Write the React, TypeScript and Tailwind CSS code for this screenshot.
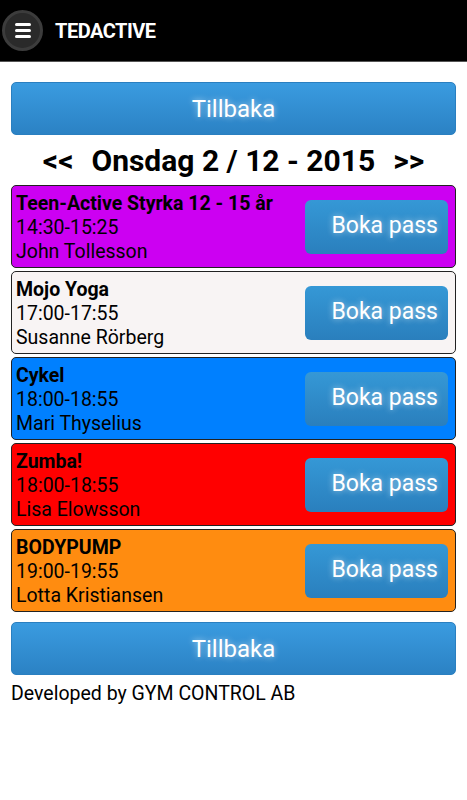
import React from 'react'

const classes = [
  { name: 'Teen-Active Styrka 12 - 15 år', time: '14:30-15:25', leader: 'John Tollesson', bg: 'bg-[#cc00f2]' },
  { name: 'Mojo Yoga', time: '17:00-17:55', leader: 'Susanne Rörberg', bg: 'bg-[#f8f4f4]' },
  { name: 'Cykel', time: '18:00-18:55', leader: 'Mari Thyselius', bg: 'bg-[#0080ff]' },
  { name: 'Zumba!', time: '18:00-18:55', leader: 'Lisa Elowsson', bg: 'bg-[#ff0000]' },
  { name: 'BODYPUMP', time: '19:00-19:55', leader: 'Lotta Kristiansen', bg: 'bg-[#ff8c10]' },
]

const glow = '[text-shadow:0_0_6px_rgba(255,255,255,0.6)]'

function BackButton() {
  return (
    <button className={`w-full h-[53px] rounded-[5px] bg-gradient-to-b from-[#3a9be0] to-[#2b82c4] border border-[#2a7fc0] text-white text-[24px] ${glow}`}>
      Tillbaka
    </button>
  )
}

export default function App() {
  return (
    <div className="w-[467px] min-h-[800px] bg-white font-['Roboto',sans-serif]">
      {/* Header */}
      <div className="h-[62px] bg-black flex items-center border-b border-[#555]">
        <div className="ml-[2px] w-[41px] h-[41px] rounded-full bg-[#2a2a2a] border-[3px] border-[#3c3c3c] flex items-center justify-center">
          <div className="flex flex-col gap-[3px]">
            <span className="block w-[16px] h-[3px] bg-white rounded-sm" />
            <span className="block w-[16px] h-[3px] bg-white rounded-sm" />
            <span className="block w-[16px] h-[3px] bg-white rounded-sm" />
          </div>
        </div>
        <span className="ml-[12px] text-white font-bold text-[20px] tracking-tight">TEDACTIVE</span>
      </div>

      <div className="px-[11px] pt-[20px]">
        <BackButton />

        <div className="flex items-center justify-center gap-[18px] h-[50px] font-bold text-[30px] text-black">
          <span>&lt;&lt;</span>
          <span>Onsdag 2 / 12 - 2015</span>
          <span>&gt;&gt;</span>
        </div>

        <div className="flex flex-col gap-[3px]">
          {classes.map((c) => (
            <div key={c.name} className={`${c.bg} h-[83px] rounded-[5px] border border-[#222] flex items-center justify-between pl-[4px] pr-[7px]`}>
              <div className="mt-[3px] text-[19.5px] leading-[24px] text-black">
                <div className="font-bold">{c.name}</div>
                <div>{c.time}</div>
                <div>{c.leader}</div>
              </div>
              <button className={`w-[143px] h-[54px] rounded-[6px] bg-gradient-to-b from-[#3598d6] to-[#2a7fbd] text-white text-[23px] flex items-center justify-end pr-[10px] ${glow}`}>
                Boka pass
              </button>
            </div>
          ))}
        </div>

        <div className="mt-[10px]">
          <BackButton />
        </div>

        <div className="mt-[4px] text-[19.5px] text-black">Developed by GYM CONTROL AB</div>
      </div>
    </div>
  )
}
